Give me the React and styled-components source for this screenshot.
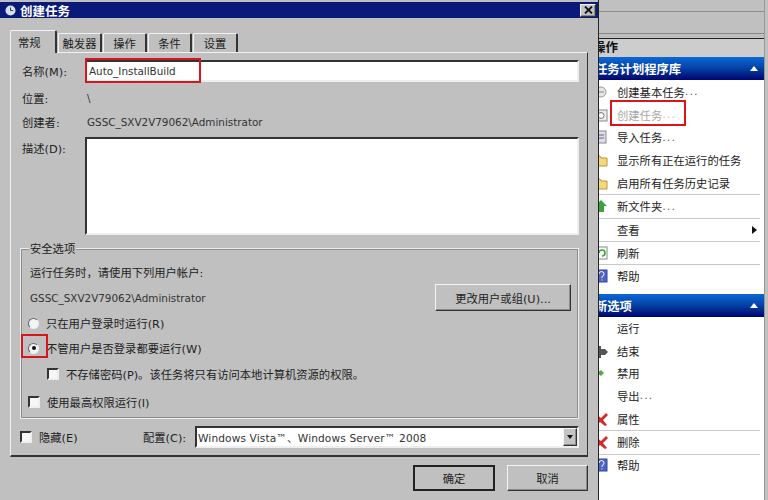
import React from 'react'
import styled, { createGlobalStyle, css } from 'styled-components'

const GlobalStyle = createGlobalStyle`
  html, body { margin: 0; padding: 0; background: #c0c0c0; }
  body { width: 768px; height: 500px; overflow: hidden; font-family: "DejaVu Sans", "Noto Sans CJK SC", sans-serif; color: #222; }
`

const raised = css`
  border: 1px solid;
  border-color: #f4f4f4 #333 #333 #f4f4f4;
  box-shadow: inset -1px -1px 0 #8a8a8a;
`

const sunken = css`
  border: 2px solid;
  border-color: #333 #eee #eee #333;
`

const Screen = styled.div`
  position: relative;
  width: 768px;
  height: 500px;
  overflow: hidden;
  background: #c0c0c0;
`

// right hand actions pane, partly hidden behind the dialog
const Pane = styled.aside`
  margin-left: 590px;
  width: 174px;
  height: 500px;
  display: flex;
  flex-direction: column;
  background: #fff;
  border-right: 1px solid #999;
`
const PaneTop = styled.div`
  height: 39px;
  flex: none;
  box-sizing: border-box;
  background: #c0c0c0;
  border-bottom: 1px solid #222;
  background-image: linear-gradient(#c0c0c0 11px, #8c8c8c 11px, #8c8c8c 12px, #c0c0c0 12px, #c0c0c0 33px, #888 33px, #888 34px, #c0c0c0 34px);
`
const PaneTitle = styled.div`
  height: 18px;
  flex: none;
  padding-left: 3px;
  background: #cdcdcd;
  font-size: 12.5px;
  line-height: 18px;
  font-weight: bold;
  color: #111;
`
const SectionBar = styled.div`
  height: 23px;
  flex: none;
  margin-top: ${p => p.$before || 0}px;
  margin-bottom: ${p => p.$after || 0}px;
  padding: 0 6px 0 5px;
  display: flex;
  align-items: center;
  justify-content: space-between;
  background: linear-gradient(#0b68d8, #0545a8 45%, #00046e);
  color: #fff;
  font-size: 12.3px;
  font-weight: bold;
`
const UpArrow = styled.span`
  border-left: 4.5px solid transparent;
  border-right: 4.5px solid transparent;
  border-bottom: 5px solid #fff;
`
const Item = styled.div`
  height: ${p => (p.$line ? 23.4 : 22.7)}px;
  flex: none;
  box-sizing: border-box;
  padding-left: 27px;
  margin-right: 4px;
  display: flex;
  align-items: center;
  position: relative;
  font-size: 11.3px;
  color: ${p => (p.$disabled ? '#a8a8a8' : '#222')};
  border-bottom: 1px solid ${p => (p.$line ? '#c9c9c9' : 'transparent')};
`
const ItemIcon = styled.svg`
  width: 16px;
  height: 16px;
  flex: none;
  margin-left: -24px;
  margin-right: 8px;
`
const Dots = styled.span`
  letter-spacing: 1px;
  opacity: 0.7;
`
const RightArrow = styled.span`
  margin-left: auto;
  margin-right: 3px;
  border-top: 4.5px solid transparent;
  border-bottom: 4.5px solid transparent;
  border-left: 5px solid #111;
`

// dialog window floating over the console
const Dialog = styled.section`
  position: absolute;
  left: 0;
  top: 0;
  width: 599px;
  height: 500px;
  padding-top: 2px;
  box-sizing: border-box;
  background: #c0c0c0;
  border-right: 1px solid #222;
  z-index: 2;
`
const TitleBar = styled.header`
  height: 16px;
  display: flex;
  align-items: center;
  padding: 0 2px 0 5px;
  background: #0a1a78;
  color: #fff;
  font-size: 12.5px;
  font-weight: bold;
`
const TitleIcon = styled.svg`
  width: 11px;
  height: 11px;
  margin-right: 4px;
`
const CloseButton = styled.button`
  margin-left: auto;
  width: 16px;
  height: 13px;
  padding: 0;
  display: flex;
  align-items: center;
  justify-content: center;
  background: #c4c4c4;
  ${raised}
`
const TabStrip = styled.div`
  display: flex;
  align-items: flex-end;
  height: 22px;
  margin: 12px 0 0 10px;
  gap: 1px;
`
const Tab = styled.div`
  box-sizing: border-box;
  width: ${p => p.$w}px;
  height: ${p => (p.$active ? 23 : 19)}px;
  margin-bottom: ${p => (p.$active ? -1 : 0)}px;
  display: flex;
  align-items: center;
  justify-content: ${p => (p.$active ? 'flex-start' : 'center')};
  padding-left: ${p => (p.$active ? 7 : 0)}px;
  background: #c0c0c0;
  font-size: 11.3px;
  border-top: 1px solid #f2f2f2;
  border-left: 1px solid #f2f2f2;
  border-right: 2px solid #333;
  border-radius: 2px 2px 0 0;
  position: relative;
  z-index: ${p => (p.$active ? 1 : 0)};
`
const TabPanel = styled.div`
  box-sizing: border-box;
  width: 578px;
  height: 405px;
  margin-left: 10px;
  border: 1px solid;
  border-color: #f2f2f2 #333 #333 #f2f2f2;
  border-bottom-width: 2px;
  display: flex;
  flex-direction: column;
`
const Field = styled.div`
  display: flex;
  align-items: ${p => (p.$top ? 'flex-start' : 'center')};
  min-height: 16px;
  margin-top: ${p => p.$gap}px;
  padding: 0 8px 0 11px;
`
const FieldLabel = styled.label`
  width: 63px;
  flex: none;
  font-size: 11.3px;
  margin-top: ${p => (p.$top ? 3 : 0)}px;
`
const Value = styled.span`
  font-size: 10.4px;
  color: #333;
  padding-left: ${p => p.$indent || 0}px;
`
const NameBox = styled.div`
  position: relative;
  flex: 1;
  height: 22px;
  box-sizing: border-box;
  display: flex;
  align-items: center;
  padding-left: 2px;
  background: #fff;
  font-size: 10.4px;
  color: #333;
  ${sunken}
`
const TextArea = styled.div`
  flex: 1;
  height: 98px;
  box-sizing: border-box;
  background: #fff;
  ${sunken}
`
const Group = styled.fieldset`
  position: relative;
  box-sizing: border-box;
  height: 171px;
  margin: 13px 8px 0 9px;
  padding: 17px 7px 0 9px;
  display: flex;
  flex-direction: column;
  border: 1px solid #eee;
  outline: 1px solid #8d8d8d;
  outline-offset: -2px;
`
const Legend = styled.span`
  position: absolute;
  left: 8px;
  top: -6px;
  padding: 0 1px;
  background: #c0c0c0;
  font-size: 11.3px;
  line-height: 14px;
`
const Line = styled.div`
  font-size: 11.3px;
  line-height: 16px;
`
const AccountRow = styled.div`
  display: flex;
  align-items: center;
  justify-content: space-between;
  height: 27px;
  margin-top: 2px;
`
const Button = styled.button`
  box-sizing: border-box;
  width: ${p => p.$w}px;
  height: ${p => p.$h}px;
  padding: 0;
  background: #c0c0c0;
  color: #222;
  font: 11.3px "DejaVu Sans", "Noto Sans CJK SC", sans-serif;
  ${raised}
  ${p => p.$default && 'border: 2px solid #222; box-shadow: none;'}
`
const Option = styled.div`
  display: flex;
  align-items: center;
  height: 16px;
  margin-top: ${p => p.$gap}px;
  margin-left: ${p => p.$indent || -2}px;
  font-size: 11.3px;
`
const Radio = styled.span`
  width: 11px;
  height: 11px;
  flex: none;
  margin-right: 7px;
  box-sizing: border-box;
  border-radius: 50%;
  border: 1px solid #666;
  border-right-color: #eee;
  border-bottom-color: #eee;
  background: #f4f4f4;
  display: flex;
  align-items: center;
  justify-content: center;
  &::after {
    content: "";
    width: 4px;
    height: 4px;
    border-radius: 50%;
    background: ${p => (p.$on ? '#111' : 'transparent')};
  }
`
const Check = styled.span`
  width: 12px;
  height: 12px;
  flex: none;
  margin-right: 7px;
  box-sizing: border-box;
  background: #f7f7f7;
  ${sunken}
`
const RedBox = styled.span`
  position: absolute;
  left: ${p => p.$x}px;
  top: ${p => p.$y}px;
  width: ${p => p.$w}px;
  height: ${p => p.$h}px;
  border: 2px solid #d8141c;
  pointer-events: none;
`
const BottomRow = styled.div`
  display: flex;
  align-items: center;
  margin-top: 7px;
  padding: 0 8px 0 9px;
  font-size: 11.3px;
`
const HiddenLabel = styled.span`
  width: 104px;
  flex: none;
`
const ConfigLabel = styled.span`
  width: 52px;
  flex: none;
`
const Combo = styled.div`
  flex: 1;
  height: 22px;
  box-sizing: border-box;
  display: flex;
  align-items: center;
  justify-content: space-between;
  padding-left: 1px;
  background: #fff;
  font-size: 10.6px;
  letter-spacing: 0.12px;
  color: #333;
  ${sunken}
`
const ComboButton = styled.span`
  width: 14px;
  height: 18px;
  box-sizing: border-box;
  background: #c4c4c4;
  display: flex;
  align-items: center;
  justify-content: center;
  ${raised}
  &::after {
    content: "";
    border-left: 3.5px solid transparent;
    border-right: 3.5px solid transparent;
    border-top: 4px solid #111;
  }
`
const Footer = styled.footer`
  display: flex;
  justify-content: flex-end;
  gap: 12px;
  width: 588px;
  margin-top: 8px;
`

const icons = {
  task: <><circle cx="8" cy="8" r="5" fill="#e6e6e6" stroke="#999" /><path d="M5 8h6" stroke="#888" /></>,
  box: <><rect x="3" y="3" width="11" height="11" fill="#eee" stroke="#888" /><circle cx="8" cy="8.5" r="3" fill="#fff" stroke="#777" /></>,
  imp: <><rect x="3" y="2" width="10" height="12" fill="#dde" stroke="#888" /><path d="M5 6h6M5 9h6" stroke="#667" /></>,
  folder: <path d="M2 4h5l1 2h6v8H2z" fill="#f5d77c" stroke="#b8963c" />,
  up: <path d="M8 2l6 6h-3v6H5V8H2z" fill="#3aa33a" />,
  refresh: <><rect x="3" y="2" width="11" height="12" fill="#fff" stroke="#888" /><path d="M6 8a3 3 0 1 1 3 3" fill="none" stroke="#3aa33a" strokeWidth="1.6" /></>,
  help: <><rect x="3" y="2" width="11" height="12" fill="#4c62c8" stroke="#34449a" /><path d="M6 6a2.5 2.5 0 1 1 3 2.5V10M9 11.5v1" fill="none" stroke="#fff" /></>,
  stop: <path d="M2 3h6v3h4l3 3-3 3H8v3H2z" fill="#555" />,
  green: <path d="M4 8l4-3 3 3-3 3z" fill="#5aa84a" />,
  red: <path d="M3 3l5 4 5-5 2 2-5 5 4 5-2 1-5-4-4 4-2-2 4-4-3-4z" fill="#d62a2a" />,
}

const Action = ({ icon, children, ...rest }) => (
  <Item {...rest}>
    {icon ? <ItemIcon viewBox="0 0 16 16">{icons[icon]}</ItemIcon> : <ItemIcon as="span" />}
    {children}
  </Item>
)

export default function App() {
  return (
    <Screen>
      <GlobalStyle />
      <Pane>
        <PaneTop />
        <PaneTitle>操作</PaneTitle>
        <SectionBar $after={1}>任务计划程序库<UpArrow /></SectionBar>
        <Action icon="task">创建基本任务<Dots>...</Dots></Action>
        <Action icon="box" $disabled>
          创建任务<Dots>...</Dots>
          <RedBox $x={20} $y={-4} $w={72} $h={22} />
        </Action>
        <Action icon="imp">导入任务<Dots>...</Dots></Action>
        <Action icon="folder">显示所有正在运行的任务</Action>
        <Action icon="folder" $line>启用所有任务历史记录</Action>
        <Action icon="up" $line>新文件夹<Dots>...</Dots></Action>
        <Action $line>查看<RightArrow /></Action>
        <Action icon="refresh" $line>刷新</Action>
        <Action icon="help">帮助</Action>
        <SectionBar $before={6}>新选项<UpArrow /></SectionBar>
        <Action>运行</Action>
        <Action icon="stop">结束</Action>
        <Action icon="green">禁用</Action>
        <Action>导出<Dots>...</Dots></Action>
        <Action icon="red" $line>属性</Action>
        <Action icon="red" $line>删除</Action>
        <Action icon="help">帮助</Action>
      </Pane>

      <Dialog>
        <TitleBar>
          <TitleIcon viewBox="0 0 11 11">
            <circle cx="5.5" cy="5.5" r="5" fill="#d8dfe8" />
            <path d="M5.5 2.5v3h2.5" stroke="#345" fill="none" />
          </TitleIcon>
          创建任务
          <CloseButton aria-label="关闭">
            <svg width="9" height="8" viewBox="0 0 9 8"><path d="M1 0.5l7 7M8 0.5l-7 7" stroke="#111" strokeWidth="1.8" /></svg>
          </CloseButton>
        </TitleBar>

        <TabStrip>
          <Tab $w={47} $active>常规</Tab>
          <Tab $w={44}>触发器</Tab>
          <Tab $w={44}>操作</Tab>
          <Tab $w={44}>条件</Tab>
          <Tab $w={45}>设置</Tab>
        </TabStrip>

        <TabPanel>
          <Field $gap={7}>
            <FieldLabel>名称(M):</FieldLabel>
            <NameBox>
              Auto_InstallBuild
              <RedBox $x={-2} $y={-4} $w={112} $h={21} />
            </NameBox>
          </Field>
          <Field $gap={8}>
            <FieldLabel>位置:</FieldLabel>
            <Value $indent={2}>\</Value>
          </Field>
          <Field $gap={8}>
            <FieldLabel>创建者:</FieldLabel>
            <Value $indent={2}>GSSC_SXV2V79062\Administrator</Value>
          </Field>
          <Field $gap={7} $top>
            <FieldLabel $top>描述(D):</FieldLabel>
            <TextArea />
          </Field>

          <Group>
            <Legend>安全选项</Legend>
            <Line>运行任务时，请使用下列用户帐户:</Line>
            <AccountRow>
              <Value>GSSC_SXV2V79062\Administrator</Value>
              <Button $w={136} $h={27}>更改用户或组(U)...</Button>
            </AccountRow>
            <Option $gap={4}><Radio />只在用户登录时运行(R)</Option>
            <Option $gap={9}><Radio $on />不管用户是否登录都要运行(W)</Option>
            <Option $gap={10} $indent={17}><Check />不存储密码(P)。该任务将只有访问本地计算机资源的权限。</Option>
            <Option $gap={12}><Check />使用最高权限运行(I)</Option>
            <RedBox $x={0} $y={85} $w={23} $h={20} />
          </Group>

          <BottomRow>
            <Check />
            <HiddenLabel>隐藏(E)</HiddenLabel>
            <ConfigLabel>配置(C):</ConfigLabel>
            <Combo>
              Windows Vista™、Windows Server™ 2008
              <ComboButton />
            </Combo>
          </BottomRow>
        </TabPanel>

        <Footer>
          <Button $w={82} $h={26} $default>确定</Button>
          <Button $w={81} $h={26}>取消</Button>
        </Footer>
      </Dialog>
    </Screen>
  )
}
